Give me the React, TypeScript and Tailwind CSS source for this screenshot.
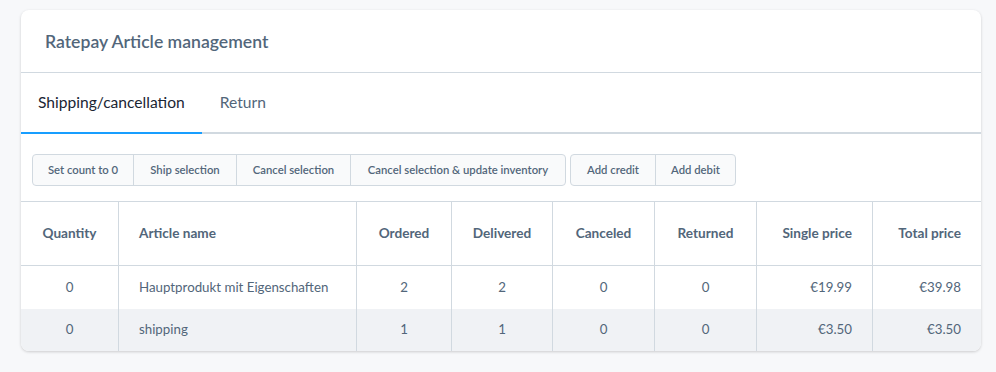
const BTN_GROUP_A = [
  { label: 'Set count to 0', w: 'w-[100px]' },
  { label: 'Ship selection', w: 'w-[103px]' },
  { label: 'Cancel selection', w: 'w-[114px]' },
  { label: 'Cancel selection & update inventory', w: 'w-[215px]' },
];
const BTN_GROUP_B = [
  { label: 'Add credit', w: 'w-[84px]' },
  { label: 'Add debit', w: 'w-[80px]' },
];

type Col = { label: string; w: string; align: 'center' | 'left' | 'right' };

const COLUMNS: Col[] = [
  { label: 'Quantity', w: 'w-[97px]', align: 'center' },
  { label: 'Article name', w: 'w-[238px]', align: 'left' },
  { label: 'Ordered', w: 'w-[95px]', align: 'center' },
  { label: 'Delivered', w: 'w-[101px]', align: 'center' },
  { label: 'Canceled', w: 'w-[102px]', align: 'center' },
  { label: 'Returned', w: 'w-[102px]', align: 'center' },
  { label: 'Single price', w: 'w-[116px]', align: 'right' },
  { label: 'Total price', w: 'flex-1', align: 'right' },
];

const ROWS = [
  ['0', 'Hauptprodukt mit Eigenschaften', '2', '2', '0', '0', '€19.99', '€39.98'],
  ['0', 'shipping', '1', '1', '0', '0', '€3.50', '€3.50'],
];

function alignClass(a: Col['align']) {
  if (a === 'left') return 'justify-start pl-[20px]';
  if (a === 'right') return 'justify-end pr-[20px]';
  return 'justify-center';
}

function ButtonGroup({ buttons }: { buttons: { label: string; w: string }[] }) {
  return (
    <div className="flex h-[32px] rounded border border-[#d1d9e0] bg-[#f9fafb] overflow-hidden">
      {buttons.map((b, i) => (
        <button
          key={b.label}
          className={`${b.w} shrink-0 text-[11.3px] font-semibold text-[#52667a] ${i > 0 ? 'border-l border-[#d1d9e0]' : ''}`}
        >
          {b.label}
        </button>
      ))}
    </div>
  );
}

export default function App() {
  return (
    <div className="h-[372px] bg-[#f7f8fa] pt-[10px] pl-[21px]" style={{ fontFamily: 'Lato, "Noto Sans", sans-serif' }}>
      <div className="w-[960px] bg-white rounded-lg shadow-[0_1px_3px_rgba(0,0,0,0.18)] overflow-hidden">
        {/* Header */}
        <div className="h-[63px] flex items-center px-[24px] pt-[3px] border-b border-[#d1d9e0]">
          <h2 className="text-[17.6px] font-semibold text-[#52667a]">Ratepay Article management</h2>
        </div>

        {/* Tabs */}
        <div className="flex h-[61px] border-b-2 border-[#d1d9e0]">
          <div className="relative flex items-center px-[17px] text-[15.6px] text-[#1a2533]">
            Shipping/cancellation
            <span className="absolute left-0 right-0 -bottom-[2px] h-[2px] bg-[#189eff]" />
          </div>
          <div className="flex items-center px-[18px] text-[15.6px] text-[#52667a]">Return</div>
        </div>

        {/* Toolbar */}
        <div className="flex gap-[4px] px-[11px] pt-[20px] pb-[15px] border-b border-[#d1d9e0]">
          <ButtonGroup buttons={BTN_GROUP_A} />
          <ButtonGroup buttons={BTN_GROUP_B} />
        </div>

        {/* Table */}
        <div className="flex h-[64px] border-b border-[#d1d9e0]">
          {COLUMNS.map((c, i) => (
            <div
              key={c.label}
              className={`${c.w} flex items-center ${alignClass(c.align)} text-[13.6px] font-bold text-[#52667a] ${i > 0 ? 'border-l border-[#d1d9e0]' : ''}`}
            >
              {c.label}
            </div>
          ))}
        </div>
        {ROWS.map((row, r) => (
          <div key={r} className={`flex ${r === 0 ? 'h-[43px]' : 'h-[42px] bg-[#f0f2f5]'}`}>
            {row.map((cell, i) => (
              <div
                key={i}
                className={`${COLUMNS[i].w} flex items-center ${alignClass(COLUMNS[i].align)} text-[13.3px] text-[#52667a] ${i > 0 ? 'border-l border-[#d1d9e0]' : ''}`}
              >
                {cell}
              </div>
            ))}
          </div>
        ))}
      </div>
    </div>
  );
}
